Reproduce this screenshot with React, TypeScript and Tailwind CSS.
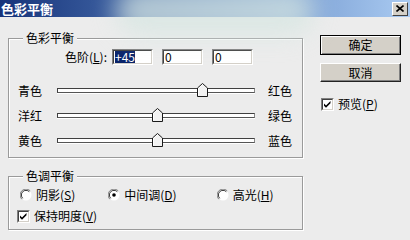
import { ReactNode } from "react";

const font = { fontFamily: '"Noto Sans CJK SC", "Liberation Sans", sans-serif' };

const GroupBox = ({ label, className, children }: { label: string; className: string; children: ReactNode }) => (
  <div className={`relative border border-[#9a9a9a] shadow-[inset_1px_1px_0_#fff,1px_1px_0_#fff] ${className}`}>
    <span className="absolute left-[14px] top-[-8px] bg-[#ececec] px-[3px] text-[12px] leading-[14px] text-black">
      {label}
    </span>
    {children}
  </div>
);

const TextBox = ({ value, selected = false }: { value: string; selected?: boolean }) => (
  <div className="w-[41px] h-[16px] border border-t-[#808080] border-l-[#808080] border-b-white border-r-white">
    <div className="h-full w-full border border-t-[#404040] border-l-[#404040] border-b-[#d4d0c8] border-r-[#d4d0c8] bg-white flex items-center pl-[1px]">
      <span
        className={`text-[12px] leading-[12px] ${selected ? "bg-[#0a246a] text-white" : "text-black"}`}
      >
        {value}
      </span>
    </div>
  </div>
);

const Thumb = () => (
  <svg width="11" height="14" viewBox="0 0 11 14">
    <polygon points="5.5,0.5 10.5,5 10.5,13.5 0.5,13.5 0.5,5" fill="#f2f2f2" stroke="#1a1a1a" />
    <polyline points="1.5,12.5 1.5,5.4 5.5,1.8" fill="none" stroke="#ffffff" />
  </svg>
);

const SliderRow = ({ left, right, thumbLeft }: { left: string; right: string; thumbLeft: string }) => (
  <div className="h-[25px] flex items-center pl-[9px] text-[12px] leading-[14px]">
    <span className="w-[24px]">{left}</span>
    <div className="relative ml-[15px] w-[198px] h-[5px] border border-t-[#404040] border-l-[#404040] border-b-[#555] border-r-[#888] bg-white shadow-[0_1px_0_#fff]">
      <div className={`absolute top-[-6px] ${thumbLeft}`}>
        <Thumb />
      </div>
    </div>
    <span className="ml-[13px]">{right}</span>
  </div>
);

const Radio = ({ checked = false }: { checked?: boolean }) => (
  <svg width="12" height="12" viewBox="0 0 12 12">
    <circle cx="6" cy="6" r="5.5" fill="#ffffff" />
    <path d="M10.2 1.8 A5.5 5.5 0 0 0 1.8 10.2" fill="none" stroke="#808080" strokeWidth="1" />
    <path d="M9.3 2.7 A4.3 4.3 0 0 0 2.7 9.3" fill="none" stroke="#303030" strokeWidth="1" />
    {checked && <circle cx="6" cy="6" r="1.8" fill="#000" />}
  </svg>
);

const Check = ({ checked = true }: { checked?: boolean }) => (
  <div className="w-[13px] h-[13px] border border-t-[#808080] border-l-[#808080] border-b-white border-r-white">
    <div className="h-full w-full border border-t-[#404040] border-l-[#404040] border-b-[#d4d0c8] border-r-[#d4d0c8] bg-white">
      {checked && (
        <svg width="9" height="9" viewBox="0 0 9 9" className="block">
          <path d="M1 3.5 L3 5.5 L7.5 1 L7.5 3.2 L3 7.7 L1 5.7 Z" fill="#000" />
        </svg>
      )}
    </div>
  </div>
);

const Button = ({ label, isDefault = false }: { label: string; isDefault?: boolean }) => (
  <div
    className={`w-[81px] flex items-center justify-center bg-[#d4d0c8] text-[12px] leading-[14px] text-black ${
      isDefault
        ? "h-[20px] border border-black shadow-[inset_1px_1px_0_#fff,inset_-1px_-1px_0_#808080]"
        : "h-[19px] border border-t-white border-l-white border-b-[#222] border-r-[#222] shadow-[inset_-1px_-1px_0_#808080]"
    }`}
  >
    {label}
  </div>
);

export default function App() {
  return (
    <div className="relative w-[410px] h-[240px] overflow-hidden bg-[#ececec] text-black" style={font}>
      <div className="relative h-[17px] flex items-center justify-between bg-gradient-to-r from-[#17337a] via-[#5a80bc] to-[#a9caf1]">
        <span className="pl-[1px] text-[13px] leading-[15px] font-bold text-white">色彩平衡</span>
        <div className="mr-[2px] w-[16px] h-[14px] bg-[#d4d0c8] border border-t-white border-l-white border-b-[#404040] border-r-[#404040] flex items-center justify-center">
          <svg width="8" height="7" viewBox="0 0 8 7">
            <path d="M0.5 0.5 L7.5 6.5 M7.5 0.5 L0.5 6.5" stroke="#000" strokeWidth="1.6" />
          </svg>
        </div>
      </div>

      <div className="flex">
        <div className="pl-[8px] pt-[21px]">
          <GroupBox label="色彩平衡" className="w-[295px] h-[120px]">
            <div className="pt-[10px] flex items-center text-[12px] leading-[14px]">
              <span className="w-[98px] text-right">
                色阶(<span className="underline">L</span>):
              </span>
              <div className="ml-[5px]">
                <TextBox value="+45" selected />
              </div>
              <div className="ml-[9px]">
                <TextBox value="0" />
              </div>
              <div className="ml-[9px]">
                <TextBox value="0" />
              </div>
            </div>
            <div className="mt-[13px]">
              <SliderRow left="青色" right="红色" thumbLeft="left-[139px]" />
              <SliderRow left="洋红" right="绿色" thumbLeft="left-[94px]" />
              <SliderRow left="黄色" right="蓝色" thumbLeft="left-[94px]" />
            </div>
          </GroupBox>

          <GroupBox label="色调平衡" className="mt-[18px] w-[295px] h-[54px]">
            <div className="pt-[11px] flex items-center h-[25px] text-[12px] leading-[14px]">
              <div className="ml-[11px] flex items-center gap-[4px]">
                <Radio />
                <span>
                  阴影(<span className="underline">S</span>)
                </span>
              </div>
              <div className="ml-[33px] flex items-center gap-[4px]">
                <Radio checked />
                <span>
                  中间调(<span className="underline">D</span>)
                </span>
              </div>
              <div className="ml-[40px] flex items-center gap-[4px]">
                <Radio />
                <span>
                  高光(<span className="underline">H</span>)
                </span>
              </div>
            </div>
            <div className="mt-[7px] ml-[8px] flex items-center gap-[4px] text-[12px] leading-[14px]">
              <Check />
              <span>
                保持明度(<span className="underline">V</span>)
              </span>
            </div>
          </GroupBox>
        </div>

        <div className="ml-[17px] pt-[18px] flex flex-col">
          <Button label="确定" isDefault />
          <div className="mt-[8px]">
            <Button label="取消" />
          </div>
          <div className="mt-[15px] ml-[1px] flex items-center gap-[4px] text-[12px] leading-[14px]">
            <Check />
            <span>
              预览(<span className="underline">P</span>)
            </span>
          </div>
        </div>
      </div>

      <div className="pointer-events-none absolute left-[115px] top-[-14px] w-[200px] h-[50px] rounded-full bg-[#d6e6e2] opacity-75 blur-[12px]" />
    </div>
  );
}
